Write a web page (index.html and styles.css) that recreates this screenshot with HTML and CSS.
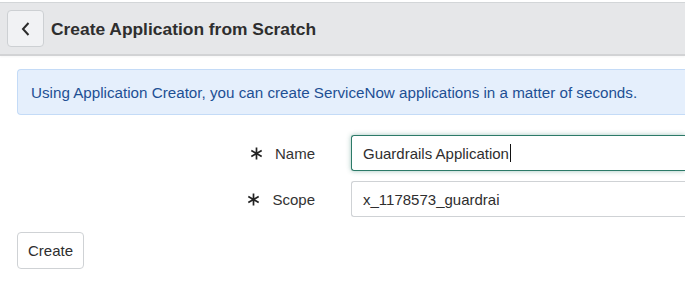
FILE: index.html
```html
<!DOCTYPE html>
<html lang="en">
<head>
  <meta charset="UTF-8" />
  <title>Create Application from Scratch</title>
  <link rel="stylesheet" href="styles.css">
</head>
<body>

  <div class="top-bar">
    <button class="back-btn" aria-label="Back">
      <svg width="12" height="16" viewBox="0 0 12 16"><path d="M8.5 2 L3 8 L8.5 14" fill="none" stroke="#2b2b2b" stroke-width="2"/></svg>
    </button>
    <h2 class="page-title">Create Application from Scratch</h2>
  </div>

  <div class="content">
    <div class="info-box">Using Application Creator, you can create ServiceNow applications in a matter of seconds.</div>

    <div class="form">
      <div class="form-row">
        <label class="field-label">
          <svg class="req" width="13" height="13" viewBox="0 0 13 13"><path d="M6.5 0.5 V12.5 M1.3 3.5 L11.7 9.5 M1.3 9.5 L11.7 3.5" stroke="#222" stroke-width="1.7" fill="none"/></svg>
          Name
        </label>
        <div class="field-input focused">Guardrails Application<span class="caret"></span></div>
      </div>
      <div class="form-row">
        <label class="field-label">
          <svg class="req" width="13" height="13" viewBox="0 0 13 13"><path d="M6.5 0.5 V12.5 M1.3 3.5 L11.7 9.5 M1.3 9.5 L11.7 3.5" stroke="#222" stroke-width="1.7" fill="none"/></svg>
          Scope
        </label>
        <div class="field-input">x_1178573_guardrai</div>
      </div>
    </div>

    <button class="create-btn">Create</button>
  </div>

</body>
</html>
```

FILE: styles.css
```css
body {
  margin: 0;
  font-family: "Liberation Sans", Arial, sans-serif;
  background: #fff;
  color: #2e2e2e;
  overflow: hidden;
}
.top-bar {
  margin-top: 2px;
  height: 51px;
  display: flex;
  align-items: center;
  padding-left: 7px;
  background: #e6e7e9;
  border-top: 1px solid #d3d6d8;
  border-bottom: 2px solid #d2d3d5;
  box-shadow: 0 1px 2px rgba(0, 0, 0, 0.04);
}
.back-btn {
  width: 37px;
  height: 37px;
  padding: 0;
  margin: 0;
  display: flex;
  align-items: center;
  justify-content: center;
  background: #f1f2f4;
  border: 1px solid #cdd0d3;
  border-radius: 4px;
}
.page-title {
  margin: 1px 0 0 7px;
  font-size: 17.4px;
  font-weight: bold;
  color: #2e2e2e;
}
.content {
  padding: 13px 0 0 17px;
}
.info-box {
  height: 44px;
  display: flex;
  align-items: center;
  padding-left: 13px;
  background: #e5effc;
  border: 1px solid #c4dbf7;
  border-right: none;
  border-radius: 4px 0 0 4px;
  color: #1e4f94;
  font-size: 15.2px;
  white-space: nowrap;
}
.form {
  margin-top: 20px;
  display: flex;
  flex-direction: column;
  gap: 10px;
}
.form-row {
  display: flex;
  align-items: center;
}
.field-label {
  width: 298px;
  display: flex;
  justify-content: flex-end;
  align-items: center;
  gap: 12px;
  font-size: 15px;
  color: #333;
}
.req {
  display: block;
}
.field-input {
  margin-left: 36px;
  flex: 1;
  height: 36px;
  box-sizing: border-box;
  display: flex;
  align-items: center;
  padding: 0 11px;
  font-size: 15px;
  color: #2e2e2e;
  border: 1px solid #cfd2d5;
  border-right: none;
  border-radius: 3px 0 0 3px;
  white-space: nowrap;
}
.field-input.focused {
  border-color: #2c7a68;
  box-shadow: 0 0 5px rgba(44, 122, 104, 0.45);
}
.caret {
  width: 1px;
  height: 18px;
  margin-left: 1px;
  background: #111;
}
.create-btn {
  margin-top: 15px;
  width: 67px;
  height: 37px;
  padding: 0;
  background: #fff;
  border: 1px solid #cfd2d5;
  border-radius: 4px;
  font-family: inherit;
  font-size: 15px;
  color: #2e2e2e;
}
```
